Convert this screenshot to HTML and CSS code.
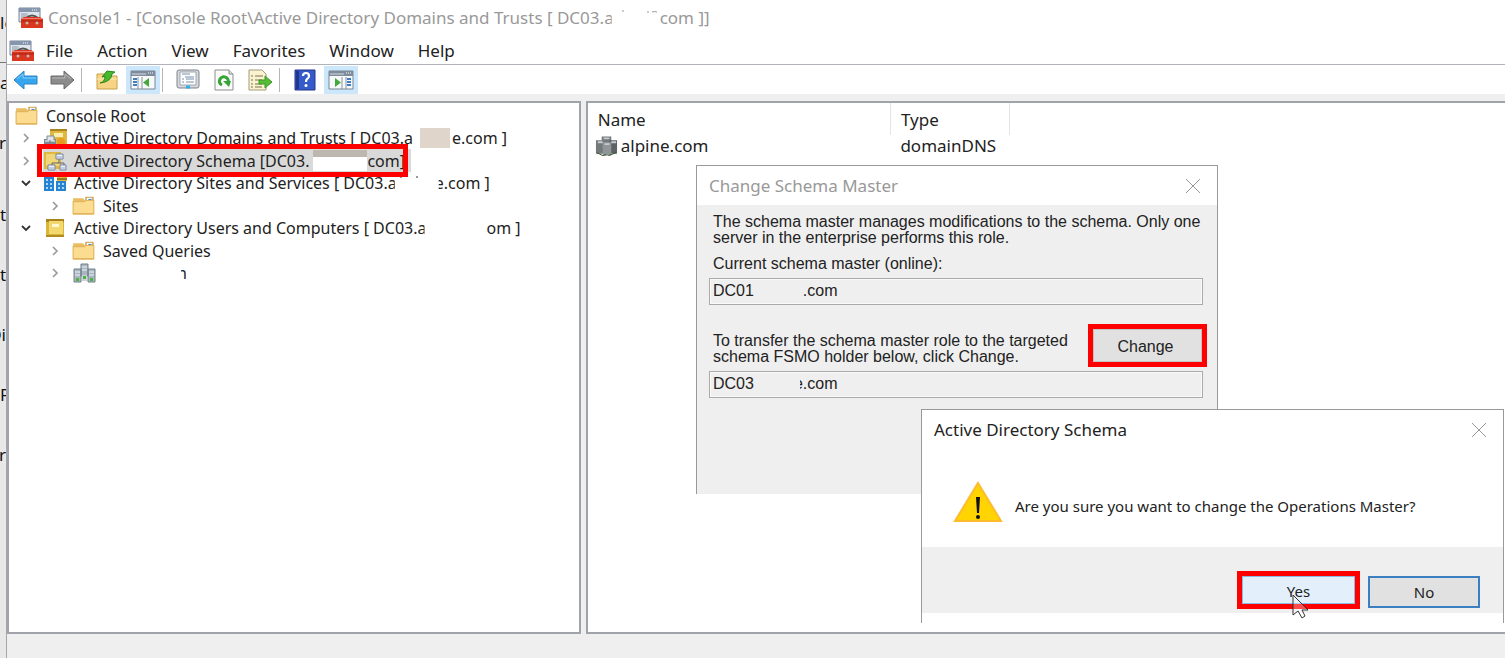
FILE: index.html
```html
<!DOCTYPE html>
<html lang="en">
<head>
    <meta charset="UTF-8">
    <meta name="viewport" content="width=device-width, initial-scale=1.0">
    <title>Console1</title>
    <link rel="stylesheet" href="styles.css">
</head>
<body>
    <!-- shared icons -->
    <svg class="sprite" width="0" height="0">
        <symbol id="toolbox" viewBox="0 0 25 21">
            <path d="M1 1h21v14H1z" fill="#dfe5ec" stroke="#75859a"/>
            <path d="M1 1h21v4H1z" fill="#8495ac"/>
            <path d="M14 3h1m1 0h1m1 0h1" stroke="#fff"/>
            <path d="M3 7h5M3 9h5M3 11h3" stroke="#8796a8"/>
            <path d="M9 6v6" stroke="#9caabb"/>
            <path d="M8 11q6-5 12 0" fill="none" stroke="#555" stroke-width="2"/>
            <path d="M3 12l3-2h16l3 2v9H3z" fill="#d9371f"/>
            <path d="M3 14h22" stroke="#a52415"/>
            <path d="M4 11.500h20" stroke="#f2796b"/>
            <circle cx="9" cy="16" r="1.500" fill="#c9b6b2"/><circle cx="19" cy="16" r="1.500" fill="#c9b6b2"/>
        </symbol>
        <symbol id="folder" viewBox="0 0 22 18">
            <path d="M1 17V2h9l2 2V1h8v16z" fill="#e9bd62"/>
            <path d="M13 1h6v4h-6z" fill="#fff" stroke="#c9a35a"/>
            <path d="M15 3h3" stroke="#4c8fc8"/>
            <path d="M1 16V5h10l2-1h7v12z" fill="#fbdc91" stroke="#e2b65e"/>
        </symbol>
        <symbol id="book" viewBox="0 0 20 20">
            <path d="M1 1h18v18H1z" fill="#d9b53a"/>
            <path d="M1 1h18v3H1z" fill="#a98320"/>
            <path d="M4 3h14v13H4z" fill="#f2d86e"/>
            <path d="M7 6h7v3H7z" fill="#fff8d0"/>
            <path d="M1 17h18v2H1z" fill="#b28a20"/>
        </symbol>
        <symbol id="closed" viewBox="0 0 8 10"><path d="M2 1l4 4-4 4" fill="none" stroke="#9b9b9b" stroke-width="1.700"/></symbol>
        <symbol id="opened" viewBox="0 0 10 8"><path d="M1 2l4 4 4-4" fill="none" stroke="#333" stroke-width="1.800"/></symbol>
        <symbol id="cross" viewBox="0 0 16 14"><path d="M1 0l14 14M15 0L1 14" stroke="#999" fill="none"/></symbol>
    </svg>

    <div class="desktop">
        <div class="behind">
            <span>lo</span><span>a</span><span class="tail">or</span><span class="far">ta</span><span>t</span><span class="tail">Di</span><span>P</span><span class="tail">r</span>
        </div>

        <div class="console">
            <header class="titlebar">
                <svg class="app-icon"><use href="#toolbox"/></svg>
                <h1>Console1 - [Console Root\Active Directory Domains and Trusts [ DC03.<span class="cut-right">a</span><svg class="gap gap-title" viewBox="0 0 46 14"><path d="M8 1h2M33 2h2M38 2q2-1 5 0" fill="none" stroke="#999"/></svg>com ]]</h1>
            </header>

            <nav class="menubar">
                <svg class="app-icon"><use href="#toolbox"/></svg>
                <button>File</button>
                <button>Action</button>
                <button>View</button>
                <button>Favorites</button>
                <button>Window</button>
                <button>Help</button>
            </nav>

            <div class="toolbar">
                <button aria-label="Back"><svg width="26" height="20" viewBox="0 0 26 20"><path d="M1 10L11 1v5h13v8H11v5z" fill="#35a5ee" stroke="#2b82c4"/><path d="M4 9l6-5v4h13" fill="none" stroke="#86d0fb"/></svg></button>
                <button aria-label="Forward"><svg width="26" height="20" viewBox="0 0 26 20"><path d="M25 10L15 1v5H2v8h13v5z" fill="#8c8c8c" stroke="#686868"/><path d="M3 8h13V4l6 5" fill="none" stroke="#b9b9b9"/></svg></button>
                <span class="sep"></span>
                <button aria-label="Up one level"><svg width="24" height="22" viewBox="0 0 24 22"><path d="M2 20V5h8l2 2h10v13z" fill="#f6d483" stroke="#caa04a"/><path d="M2 10h20" stroke="#fcebb8"/><path d="M5 14q5-1 5-7l-3 1 5-6 8 1-3 2q-1 8-12 9z" fill="#45b82e" stroke="#268a1b"/></svg></button>
                <button class="on" aria-label="Show console tree"><svg width="26" height="20" viewBox="0 0 26 20"><path d="M1 1h24v18H1z" fill="#f7f8fa" stroke="#7b8794"/><path d="M1 1h24v5H1z" fill="#7f8c9b"/><path d="M2 4h14" stroke="#d7dde4"/><path d="M18 3h1m1 0h1m1 0h1" stroke="#fff"/><path d="M8 7v12M12 7v12" stroke="#8793a1"/><path d="M3 9h4M3 12h4M3 15h4" stroke="#3f7ec0" stroke-width="2"/><path d="M19 8v9l-6-4.500z" fill="#44a83a"/></svg></button>
                <span class="sep"></span>
                <button aria-label="Properties"><svg width="24" height="21" viewBox="0 0 24 21"><rect x="1" y="1" width="22" height="18" rx="2" fill="#d5d8dc" stroke="#7e858d"/><path d="M4 3h16v13H4z" fill="#fff" stroke="#a2a8af"/><path d="M6 5h8M6 10h2m2 0h8M6 13h2m2 0h8" stroke="#7a8da3"/><path d="M9 8h9" stroke="#b5c6dc" stroke-width="2"/><path d="M10 18h4" stroke="#2cb0e6" stroke-width="3"/></svg></button>
                <button aria-label="Refresh"><svg width="22" height="22" viewBox="0 0 22 22"><path d="M2 1h14l4 4v16H2z" fill="#fbfbfb" stroke="#8d8d8d"/><path d="M16 1v4h4" fill="#ddd" stroke="#8d8d8d"/><path d="M9 16q-4-2-2-6 3-4 7-1 2 2 1 5" fill="none" stroke="#36a536" stroke-width="3"/><path d="M10 12h8l-2 6z" fill="#36a536"/></svg></button>
                <button aria-label="Export list"><svg width="26" height="22" viewBox="0 0 26 22"><path d="M2 1h13l4 4v16H2z" fill="#fbf3cf" stroke="#a39b7c"/><path d="M4 7h2m2 0h8M4 11h2m2 0h7M4 15h2m2 0h7M4 18h2m2 0h7" stroke="#77724e"/><path d="M12 11h6V7l7 6-7 6v-4h-6z" fill="#57bd37" stroke="#3d9a27"/></svg></button>
                <span class="sep"></span>
                <button aria-label="Help"><svg width="22" height="22" viewBox="0 0 22 22"><path d="M1 1h20v20H1z" fill="#345bc9" stroke="#25358b"/><path d="M2 2h3v18H2z" fill="#21368f"/><path d="M9 7q0-3 3-3t3 3q0 2-2 3-1 1-1 3" fill="none" stroke="#fff" stroke-width="2.200"/><circle cx="12" cy="16.500" r="1.500" fill="#fff"/></svg></button>
                <button class="on" aria-label="Show action pane"><svg width="26" height="20" viewBox="0 0 26 20"><path d="M1 1h24v18H1z" fill="#f7f8fa" stroke="#7b8794"/><path d="M1 1h24v5H1z" fill="#7f8c9b"/><path d="M2 4h14" stroke="#d7dde4"/><path d="M18 3h1m1 0h1m1 0h1" stroke="#fff"/><path d="M14 7v12M18 7v12" stroke="#8793a1"/><path d="M19 9h4M19 12h4M19 15h4" stroke="#3f7ec0" stroke-width="2"/><path d="M7 8v9l6-4.500z" fill="#44a83a"/></svg></button>
            </div>

            <main class="panes">
                <ul class="tree">
                    <li><svg class="icon"><use href="#folder"/></svg>Console Root</li>
                    <li class="level1">
                        <svg class="arrow"><use href="#closed"/></svg>
                        <svg class="icon" viewBox="0 0 24 20"><path d="M7 1h17v18H7z" fill="#dfb93f"/><path d="M7 1h17v2H7z" fill="#a98320"/><path d="M11 5h9v4h-9z" fill="#fbeeb0"/><path d="M1 11h12v7H1z" fill="#7d8a96"/><path d="M4 8h7v5H4z" fill="#dfe5ea" stroke="#7d8a96"/><path d="M2 13h4m2 0h4" stroke="#fff"/><circle cx="18" cy="14" r="4" fill="#e79a1e"/></svg>
                        Active Directory Domains and Trusts [ DC03.a<span class="gap block"></span>e.com ]
                    </li>
                    <li class="level1 selected">
                        <svg class="arrow"><use href="#closed"/></svg>
                        <svg class="icon" viewBox="0 0 24 20"><path d="M1 1h17v17H1z" fill="#dfb93f"/><path d="M3 3h14v12H3z" fill="#f0d677"/><path d="M16 8v4M9 15v-3h12v3" fill="none" stroke="#666"/><path d="M13 3h7v5h-7zM5 14h7v5H5zM17 14h6v5h-6z" fill="#eef2fa" stroke="#7480a0"/><path d="M14 6h5M6 17h5m7 0h4" stroke="#8fa4cf"/></svg>
                        Active Directory Schema [DC03.<span class="gap patch"></span>com]
                    </li>
                    <li class="level1">
                        <svg class="arrow"><use href="#opened"/></svg>
                        <svg class="icon" viewBox="0 0 24 20"><path d="M1 4h10v14H1zM13 8h10v10H13z" fill="#2583d1"/><path d="M3 7h2m2 0h2M3 11h2m2 0h2M3 15h2m2 0h2M15 11h2m2 0h2M15 15h2m2 0h2" stroke="#a9d8f8" stroke-width="2"/><path d="M14 0h10v8H14z" fill="#dcb63e"/><path d="M14 6h10" stroke="#99751c" stroke-width="2"/></svg>
                        Active Directory Sites and Services [ DC03.<span class="cut-right">a</span><svg class="gap gap-sites" viewBox="0 0 38 14"><path d="M4 0v2M19 1h2" stroke="#333"/></svg><span class="cut-left">e</span>.com ]
                    </li>
                    <li class="level2"><svg class="arrow"><use href="#closed"/></svg><svg class="icon"><use href="#folder"/></svg>Sites</li>
                    <li class="level1">
                        <svg class="arrow"><use href="#opened"/></svg>
                        <svg class="icon"><use href="#book"/></svg>
                        Active Directory Users and Computers [ DC03.<span class="cut-right">a</span><span class="gap gap-users"></span>om ]
                    </li>
                    <li class="level2"><svg class="arrow"><use href="#closed"/></svg><svg class="icon"><use href="#folder"/></svg>Saved Queries</li>
                    <li class="level2">
                        <svg class="arrow"><use href="#closed"/></svg>
                        <svg class="icon" viewBox="0 0 24 20"><path d="M9 1h7v12H9zM2 6h7v13H2zM16 6h7v13h-7z" fill="#a9b6c0" stroke="#71808b"/><path d="M10 4h5M10 7h5M3 9h5M3 12h5M17 9h5M17 12h5" stroke="#edf3f6"/><path d="M10 12h5v6h-5z" fill="#c9d3da"/><path d="M4 15h3v3H4zM18 15h3v3h-3zM11 13h3v3h-3z" fill="#4eb53c"/></svg>
                        <span class="gap gap-domain"></span><span class="cut-left">n</span>
                    </li>
                </ul>

                <section class="list">
                    <table>
                        <thead>
                            <tr><th class="name">Name</th><th class="type">Type</th><th></th></tr>
                        </thead>
                        <tbody>
                            <tr>
                                <td><svg class="icon" viewBox="0 0 24 22"><path d="M7 1h10v12H7zM1 5h8v14H1z" fill="#74797c"/><path d="M15 5h8v14h-8z" fill="#5d6264"/><path d="M8 7h9v14H8z" fill="#909698"/><path d="M9 3h6M3 7h5M10 9h5M17 7h5" stroke="#c5cccf" stroke-width="2"/><path d="M2 18l6 3 4-1M14 21l8-3" stroke="#315429" fill="none"/></svg>alpine.com</td>
                                <td class="type">domainDNS</td>
                                <td></td>
                            </tr>
                        </tbody>
                    </table>
                </section>
            </main>
        </div>

        <form class="dialog schema-dialog">
            <div class="dialog-title inactive">
                <h2>Change Schema Master</h2>
                <button type="button" class="close" aria-label="Close"><svg width="16" height="14"><use href="#cross"/></svg></button>
            </div>
            <div class="schema-body">
                <p>The schema master manages modifications to the schema. Only one<br>server in the enterprise performs this role.</p>
                <label for="current">Current schema master (online):</label>
                <div class="field"><input id="current" type="text" readonly value="DC01           .com"></div>
                <div class="transfer">
                    <label for="target">To transfer the schema master role to the targeted<br>schema FSMO holder below, click Change.</label>
                    <span class="mark"><button type="button">Change</button></span>
                </div>
                <div class="field"><input id="target" type="text" readonly value="DC03         e.com"></div>
            </div>
        </form>

        <div class="dialog confirm-dialog">
            <div class="dialog-title">
                <h2>Active Directory Schema</h2>
                <button class="close" aria-label="Close"><svg width="16" height="14"><use href="#cross"/></svg></button>
            </div>
            <div class="question">
                <svg width="50" height="42" viewBox="0 0 50 42"><path d="M25 2l23 38H2z" fill="#ffd400" stroke="#fdbb2d" stroke-width="2"/><path d="M23 16h4l-1 16h-2z" fill="#111"/><circle cx="25" cy="36" r="2" fill="#111"/></svg>
                <p>Are you sure you want to change the Operations Master?</p>
            </div>
            <div class="actions">
                <span class="mark">
                    <button class="yes">Yes</button>
                    <svg class="pointer" width="18" height="26" viewBox="0 0 18 26"><path d="M1 1v20l5-4 4 7 3-2-3-6h6z" fill="#fff" fill-opacity=".3" stroke="#333"/></svg>
                </span>
                <button class="no">No</button>
            </div>
        </div>
    </div>
</body>
</html>
```
FILE: styles.css
```css
*, *::before, *::after {
    box-sizing: border-box;
}
body {
    margin: 0;
    font-family: "Noto Sans", "Open Sans", sans-serif;
    font-size: 17px;
    color: #222;
}
h1, h2, p, ul {
    margin: 0;
    padding: 0;
    font-size: inherit;
    font-weight: normal;
}
button, input {
    font: inherit;
    color: inherit;
}
.sprite {
    position: absolute;
}
.desktop {
    position: relative;
    display: flex;
    height: 100vh;
    overflow: hidden;
    background-color: #fff;
}

/* sliver of the window underneath */
.behind {
    display: flex;
    flex-direction: column;
    width: 6px;
    padding-top: 9px;
    overflow: hidden;
    background: linear-gradient(#777, #777) no-repeat 0 62px / 100% 1px #e8e8e8;
    color: #111;
}
.behind span {
    display: flex;
    height: 60px;
    line-height: 28px;
}
.behind .tail {
    justify-content: flex-end;
}
.behind .far {
    margin-top: 12px;
}

/* console window */
.console {
    flex: 1;
    display: flex;
    flex-direction: column;
    min-width: 0;
    border-left: 1px solid #a5a6aa;
}
.titlebar {
    display: flex;
    align-items: center;
    gap: 5px;
    height: 36px;
    padding: 0 0 2px 11px;
    color: #999;
    white-space: nowrap;
}
.app-icon {
    width: 25px;
    height: 21px;
}
.menubar {
    display: flex;
    align-items: center;
    height: 28px;
    padding-left: 2px;
}
.menubar button {
    padding: 0 12px;
    border: none;
    background: none;
}
.toolbar {
    display: flex;
    align-items: center;
    gap: 2px;
    height: 30px;
    padding-left: 2px;
    border-top: 1px solid #b0b3ba;
}
.toolbar button {
    display: flex;
    align-items: center;
    justify-content: center;
    width: 34px;
    height: 28px;
    padding: 0;
    border: none;
    background: none;
}
.toolbar .on {
    background-color: #cce6fb;
}
.sep {
    width: 1px;
    height: 24px;
    margin-right: 6px;
    background-color: #b5b5b5;
}
.panes {
    flex: 1;
    display: flex;
    gap: 5px;
    min-height: 0;
    padding: 7px 0 24px;
    background-color: #efefef;
}
.tree, .list {
    border: 2px solid #a0a3aa;
    background-color: #fff;
}
.tree {
    width: 38.3%;
    padding-top: 1px;
    list-style: none;
    font-size: 16px;
    white-space: nowrap;
}
.list {
    flex: 1;
    border-right: none;
}

/* tree rows */
.tree li {
    position: relative;
    display: flex;
    align-items: center;
    height: 23px;
    padding-left: 6px;
}
.tree li:nth-child(even) {
    height: 22px;
}
.tree .icon {
    width: 24px;
    height: 20px;
    margin-right: 7px;
}
.tree .arrow {
    width: 10px;
    height: 10px;
    margin-right: 12px;
}
.tree .level1 {
    padding-left: 12px;
}
.tree .level2 {
    padding-left: 41px;
}
.tree .selected {
    background: linear-gradient(#d9d9d9, #d9d9d9) no-repeat 34px 0 / 368px 100%;
}
.selected::after {
    content: "";
    position: absolute;
    z-index: 1;
    left: 28px;
    top: -5px;
    width: 371px;
    height: 33px;
    border: 5px solid #f00;
}

/* blanked-out parts of the server names */
.gap {
    display: inline-block;
    height: 14px;
}
.gap-title {
    width: 46px;
}
.block {
    width: 30px;
    height: 20px;
    margin: 0 2px 0 7px;
    background-color: #e0d5cb;
}
.patch {
    width: 54px;
    height: 21px;
    margin-left: 4px;
    border-top: 7px solid #bdb7b0;
    background-color: #fff;
}
.gap-sites {
    width: 38px;
}
.gap-users {
    width: 60px;
}
.gap-domain {
    width: 74px;
}
.cut-right {
    display: inline-block;
    clip-path: inset(0 2px 0 0);
}
.cut-left {
    display: inline-block;
    clip-path: inset(0 0 0 4px);
}

/* result list */
.list table {
    width: 100%;
    border-collapse: collapse;
    table-layout: fixed;
}
.list th {
    height: 32px;
    padding: 0 0 0 10px;
    border-right: 1px solid #e5e5e5;
    font-weight: normal;
    text-align: left;
}
.list th:last-child {
    border-right: none;
}
.list th.name {
    width: 33%;
}
.list th.type {
    width: 13%;
}
.list td {
    height: 22px;
    padding: 0 0 0 7px;
    line-height: 22px;
}
.list td.type {
    padding-left: 10px;
}
.list .icon {
    width: 23px;
    height: 22px;
    margin-right: 3px;
    vertical-align: top;
}

/* dialogs */
.dialog {
    position: absolute;
    border: 1px solid #999;
    border-bottom: none;
    background-color: #fff;
}
.dialog-title {
    display: flex;
    align-items: center;
    justify-content: space-between;
    height: 39px;
    padding: 0 16px 0 12px;
}
.inactive {
    color: #999;
}
.close {
    display: flex;
    padding: 0;
    border: none;
    background: none;
}
.schema-dialog {
    left: 696px;
    top: 165px;
    width: 522px;
}
.schema-body {
    height: 289px;
    padding: 9px 12px 0;
    background-color: #efefef;
    font-family: "Liberation Sans", Arial, sans-serif;
    font-size: 16px;
    line-height: 16px;
    white-space: nowrap;
}
.schema-body p, .schema-body label {
    display: block;
    padding-left: 4px;
}
.schema-body p {
    margin-bottom: 10px;
}
.field {
    position: relative;
    width: 494px;
    margin-top: 6px;
}
.field::after {
    content: "";
    position: absolute;
    left: 48px;
    top: 3px;
    width: 43px;
    height: 20px;
    background-color: #efefef;
}
.field input {
    width: 100%;
    height: 27px;
    padding: 0 3px 2px;
    border: 1px solid #aaa;
    outline: 1px solid #fafafa;
    outline-offset: -2px;
    background-color: #efefef;
}
.transfer {
    display: flex;
    align-items: center;
    justify-content: space-between;
    width: 498px;
    margin-top: 19px;
    margin-bottom: -2px;
}
.transfer label {
    padding-top: 6px;
}
.mark {
    position: relative;
    display: flex;
    border: 5px solid #f00;
}
.mark button {
    width: 109px;
    height: 33px;
    padding: 2px 4px 0 0;
    border: 1px solid #c4c4c4;
    background-color: #e1e1e1;
}
.confirm-dialog {
    left: 921px;
    top: 409px;
    width: 583px;
    height: 214px;
}
.question {
    display: flex;
    align-items: center;
    gap: 12px;
    height: 98px;
    padding: 8px 0 0 31px;
    font-size: 15px;
}
.question p {
    padding-top: 8px;
}
.actions {
    display: flex;
    justify-content: flex-end;
    align-items: flex-start;
    gap: 8px;
    height: 66px;
    padding: 24px 23px 0 0;
    background-color: #efefef;
    font-size: 15px;
}
.mark .yes {
    width: 113px;
    height: 28px;
    padding: 2px 0 0;
    border-color: #8bbbe3;
    background-color: #e3effa;
}
.no {
    width: 112px;
    height: 32px;
    margin-top: 5px;
    padding: 0;
    border: 2px solid #3a80c3;
    background-color: #e1e1e1;
}
.pointer {
    position: absolute;
    left: 50px;
    top: 18px;
}
```
